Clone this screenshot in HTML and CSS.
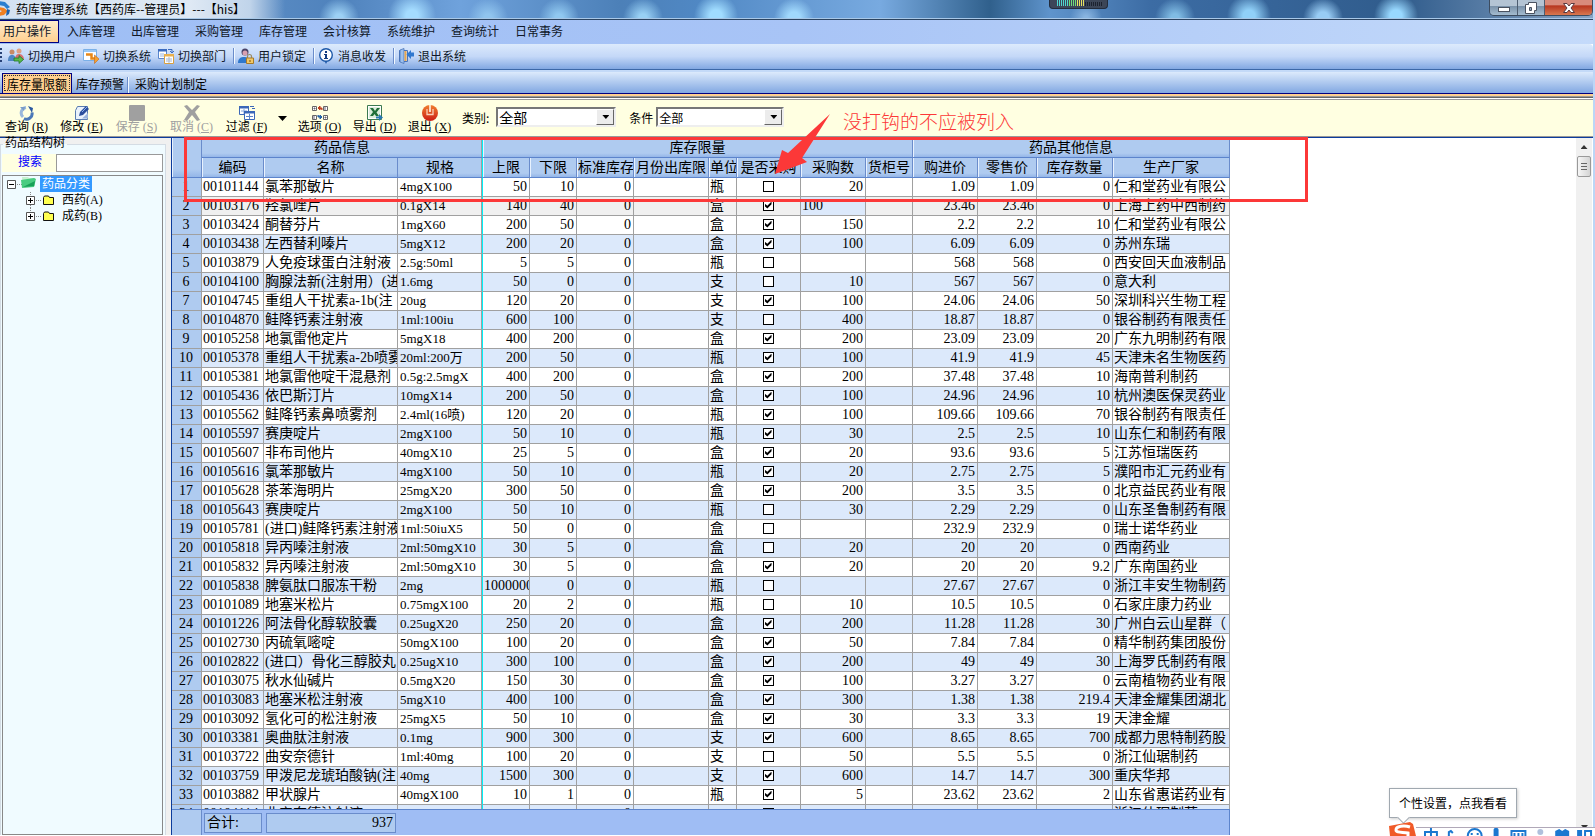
FILE: index.html
```html
<!DOCTYPE html>
<html lang="zh-CN">
<head>
    <meta charset="UTF-8">
    <meta name="viewport" content="width=device-width, initial-scale=1.0">
    <title>药库管理系统</title>
    <link rel="stylesheet" href="styles.css">
</head>
<body>
    <div class="app">
        <header class="titlebar">
            <svg class="app-icon" width="12" height="16" viewBox="0 0 12 16">
                <path d="M0 1l6 1 5 5-3 2-3-3-5-1z" fill="#2a7fd0"/>
                <path d="M0 7l5 1 4 3-4 4-5 1v-3l3-2-3-1z" fill="#f08020"/>
                <path d="M8 9l3 1-1 4-3 2z" fill="#1c62ae"/>
            </svg>
            <span class="title">药库管理系统【西药库--管理员】---【his】</span>
            <div class="meter">
                <svg width="46" height="6" viewBox="0 0 46 6">
                    <path d="M0 3h12" stroke="#4fd6d0" stroke-width="6" stroke-dasharray="1 1"/>
                    <path d="M12 3h8" stroke="#6fdc7a" stroke-width="6" stroke-dasharray="1 1"/>
                    <path d="M20 3h8" stroke="#e8e060" stroke-width="6" stroke-dasharray="1 1"/>
                    <path d="M28 4h18" stroke="#1c2230" stroke-width="4" stroke-dasharray="1 1"/>
                </svg>
            </div>
            <div class="win-buttons">
                <button class="win-btn" aria-label="最小化">
                    <svg width="14" height="12" viewBox="0 0 14 12"><rect x="1.5" y="5.500" width="11" height="4" fill="#fff" stroke="#4a5260"/></svg>
                </button>
                <button class="win-btn win-restore" aria-label="还原">
                    <svg width="12" height="12" viewBox="0 0 12 12"><path d="M3.500 .5h8v8h-2v3h-9v-9h3z" fill="#fff" stroke="#4a5260"/><path d="M4.500 5.500h2v3h-2z" fill="#8ea4bc" stroke="#4a5260"/></svg>
                </button>
                <button class="win-btn win-close" aria-label="关闭">
                    <svg width="14" height="12" viewBox="0 0 14 12"><path d="M1.500 1.500h3.500l2 2.500 2-2.500h3.500l-3.500 4.500 3.500 4.500h-3.500l-2-2.500-2 2.500h-3.500l3.500-4.500z" fill="#fff" stroke="#5a3a40"/></svg>
                </button>
            </div>
        </header>

        <nav class="menubar">
            <button class="menu-item active">用户操作</button>
            <button class="menu-item">入库管理</button>
            <button class="menu-item">出库管理</button>
            <button class="menu-item">采购管理</button>
            <button class="menu-item">库存管理</button>
            <button class="menu-item">会计核算</button>
            <button class="menu-item">系统维护</button>
            <button class="menu-item">查询统计</button>
            <button class="menu-item">日常事务</button>
        </nav>

        <div class="quickbar">
            <span class="grip"></span>
            <button class="quick">
                <svg width="16" height="16" viewBox="0 0 16 16">
                    <circle cx="4" cy="4" r="2.500" fill="#c98a66"/><path d="M0 13c0-5 2-6 4-6s4 1 4 6z" fill="#4f86c4"/>
                    <circle cx="11" cy="3" r="2.500" fill="#e0a080"/><path d="M7 12c0-5 2-6 4-6s5 1 5 6z" fill="#d87070"/>
                    <path d="M6 10h5V7.500l4.500 4-4.500 4V13H6z" fill="#5cb84a" stroke="#1f7a28" stroke-width=".8"/>
                </svg>切换用户
            </button>
            <button class="quick">
                <svg width="16" height="16" viewBox="0 0 16 16">
                    <path d="M.5 1.500h13v11H.5z" fill="#fff" stroke="#7ab0e8"/><path d="M1 2h12v2H1z" fill="#9cc8f4"/>
                    <path d="M3 6.500h5.500v4H13" fill="none" stroke="#e88818" stroke-width="2.500"/><path d="M11.500 7l4.500 4-4.500 4.500z" fill="#f5a030" stroke="#c86810" stroke-width=".6"/>
                </svg>切换系统
            </button>
            <button class="quick">
                <svg width="16" height="16" viewBox="0 0 16 16">
                    <path d="M.5 1.500h8v9h-8z" fill="#fff" stroke="#5a86cc"/><path d="M0 1h9v2.500H0z" fill="#3c6cc0"/><path d="M2 6h4M2 8h4" stroke="#9ab6e0"/>
                    <path d="M10 1.500h4v3M12 3l2 2 2-2" fill="none" stroke="#3c6cc0"/>
                    <path d="M6.500 6.500h9v9h-9z" fill="#fff" stroke="#d8a040"/><path d="M6 6h10v2.500H6z" fill="#e8b050"/><path d="M8 11h6M8 13h6M11 9v6" stroke="#a8b8d0"/>
                </svg>切换部门
            </button>
            <span class="sep"></span>
            <button class="quick">
                <svg width="16" height="16" viewBox="0 0 16 16">
                    <circle cx="7" cy="4" r="3.500" fill="#4a4468"/><circle cx="7" cy="5" r="2.500" fill="#d8a0b0"/>
                    <path d="M0 15c0-5 3-6 6-6s5 1 5 6z" fill="#2f78cc"/>
                    <path d="M9.500 10V8.500a2 2 0 0 1 4 0V10" fill="none" stroke="#9a8a60" stroke-width="1.200"/><path d="M8.500 10h7v5.500h-7z" fill="#f0c868" stroke="#a87a28"/><path d="M12 12v2" stroke="#805010"/>
                </svg>用户锁定
            </button>
            <span class="sep"></span>
            <button class="quick">
                <svg width="16" height="16" viewBox="0 0 16 16">
                    <path d="M6 12l2 4 2-4z" fill="#1c58a8"/><circle cx="8" cy="7" r="6.300" fill="#fff" stroke="#1c58a8" stroke-width="1.400"/>
                    <path d="M7 3h2v2H7zM6 6h3v4h1v1H6v-1h1V7H6z" fill="#143c80"/>
                </svg>消息收发
            </button>
            <span class="sep"></span>
            <button class="quick">
                <svg width="16" height="16" viewBox="0 0 16 16">
                    <path d="M1.500 2.500h8v11h-8z" fill="#d6e6fa" stroke="#4a74b8"/><path d="M2 2l4-1.500v15L2 14z" fill="#9cc0ee" stroke="#4a74b8" stroke-width=".8"/>
                    <path d="M6.500 3h2v10h-2z" fill="#e8a850"/><path d="M16 4.500h-3V2L8.500 6.500 13 11V8.500h3z" fill="#2f78d0"/>
                </svg>退出系统
            </button>
        </div>

        <div class="tabs">
            <button class="tab active">库存量限额</button>
            <button class="tab">库存预警</button>
            <span class="sep"></span>
            <button class="tab">采购计划制定</button>
        </div>

        <div class="toolbar">
            <button class="tool">
                <svg width="16" height="16" viewBox="0 0 16 16">
                    <path d="M7 2.500A5.500 5.500 0 0 0 4 12" fill="none" stroke="#9ab8dc" stroke-width="3"/><path d="M5 13.500a5.500 5.500 0 0 0 8-6" fill="none" stroke="#4a78b8" stroke-width="3"/>
                    <path d="M9 1l5 2-1 5z" fill="#2a58a0"/><path d="M1 2l5 0-1 4z" fill="#7a9cc8"/>
                </svg>
                <span>查询 (<u>R</u>)</span>
            </button>
            <button class="tool">
                <svg width="16" height="16" viewBox="0 0 16 16">
                    <path d="M3.500 1.500h10v13h-12v-9z" fill="#eaf2fc" stroke="#5a7cb0"/><path d="M8 13.500h6V8z" fill="#9ab4dc"/>
                    <path d="M6 7l6-6 3 3-6 6-4 1z" fill="#2c4f9c"/><path d="M8 7l5-5" stroke="#8cb0ec"/>
                </svg>
                <span>修改 (<u>E</u>)</span>
            </button>
            <button class="tool" disabled>
                <svg width="16" height="16" viewBox="0 0 16 16"><rect width="16" height="16" rx="1" fill="#a0a0a0"/></svg>
                <span>保存 (<u>S</u>)</span>
            </button>
            <button class="tool" disabled>
                <svg width="16" height="16" viewBox="0 0 16 16"><path d="M0 1l3-1 5 5 5-5 3 1-5 6 5 8-3 1-5-6-5 6-3-1 5-8z" fill="#a0a0a0"/></svg>
                <span>取消 (<u>C</u>)</span>
            </button>
            <button class="tool">
                <svg width="16" height="16" viewBox="0 0 16 16">
                    <path d="M.5 1.500h9v8h-9z" fill="#fff" stroke="#3c68b8"/><path d="M0 1h10v2.500H0z" fill="#3c68b8"/><path d="M2 6h6M5 4v5" stroke="#88a8dc"/>
                    <path d="M11 1.500h4M13 3.500h3" stroke="#3c68b8"/>
                    <path d="M5.500 6.500h10v8h-10z" fill="#fff" stroke="#3c68b8"/><path d="M5 6h11v2.500H5z" fill="#3c68b8"/><path d="M7 11.500h7M10.500 9v5" stroke="#5c84c8"/>
                </svg>
                <span>过滤 (<u>F</u>)</span>
            </button>
            <button class="drop" aria-label="更多过滤"></button>
            <button class="tool">
                <svg width="16" height="16" viewBox="0 0 16 16">
                    <path d="M.5 1.500h4v4h-4zM11.500 1.500h4v4h-4z" fill="#fff" stroke="#666"/><path d="M.5 10.500h4v4h-4zM11.500 10.500h4v4h-4z" fill="#fff" stroke="#666"/>
                    <path d="M2 3h1v1H2zM13 2v3M2 11v3M13 12h1v1h-1z" fill="#444" stroke="#667"/>
                    <path d="M10 5V3H7M8 1L6 3l2 2z" fill="#c04020" stroke="#c04020"/><path d="M6 10v2h3M8 10l2 2-2 2z" fill="#2060a8" stroke="#2060a8"/>
                </svg>
                <span>选项 (<u>O</u>)</span>
            </button>
            <button class="tool">
                <svg width="16" height="16" viewBox="0 0 16 16">
                    <path d="M.5.5h14v14H.5z" fill="#fff" stroke="#3c7a50"/><path d="M2 2h11v11H2z" fill="#dcecdc"/>
                    <path d="M3 3h3l2 3 2-3h3L9.500 7.500 12 11H9L7.500 9 6 11H3l3-4z" fill="#1f6e38"/>
                    <path d="M9 11.500h3V9l4 3.500-4 3.500v-2.500H9z" fill="#2878b0"/>
                </svg>
                <span>导出 (<u>D</u>)</span>
            </button>
            <button class="tool">
                <svg width="16" height="16" viewBox="0 0 16 16">
                    <defs><linearGradient id="power" x1="0" y1="0" x2="0" y2="1"><stop offset="0" stop-color="#f08030"/><stop offset="1" stop-color="#cc1c14"/></linearGradient></defs>
                    <circle cx="8" cy="8" r="8" fill="url(#power)"/><path d="M5 4v5.500h6V4" fill="none" stroke="#f8d0b8" stroke-width="1.300"/><path d="M8 0v7" stroke="#fff4e8" stroke-width="1.600"/>
                </svg>
                <span>退出 (<u>X</u>)</span>
            </button>
            <div class="filter">
                <label for="category">类别:</label>
                <div class="combo combo-lg">
                    <select id="category"><option>全部</option></select>
                </div>
            </div>
            <div class="filter">
                <label for="condition">条件</label>
                <div class="combo">
                    <select id="condition"><option>全部</option></select>
                </div>
            </div>
        </div>

        <main class="workspace">
            <aside class="sidebar">
                <fieldset class="tree-group">
                    <legend>药品结构树</legend>
                    <div class="search">
                        <label for="search">搜索</label>
                        <input type="text" id="search">
                    </div>
                    <div class="tree">
                        <div class="node">
                            <svg width="29" height="16" viewBox="0 0 29 16">
                                <path d="M.5 4.500h8v8h-8z" fill="#fff" stroke="#555"/><path d="M2 8.500h5" stroke="#000"/><path d="M10 8.500h5" stroke="#888" stroke-dasharray="1 1"/>
                                <path d="M15 1l6 0 1 1h6v8l-12 2z" fill="#c8f0d0"/><path d="M14 4l13-2 2 1-2 8-12 1z" fill="#48cc80"/><path d="M16 11l11-1 1-5z" fill="#18a058"/>
                            </svg>
                            <span class="selected">药品分类</span>
                        </div>
                        <div class="node child">
                            <svg width="29" height="16" viewBox="0 0 29 16">
                                <path d="M4.500 0v4" stroke="#888" stroke-dasharray="1 1"/><path d="M.5 4.500h8v8h-8z" fill="#fff" stroke="#555"/><path d="M2 8.500h5M4.500 6v5" stroke="#000"/><path d="M4.500 13v3" stroke="#888" stroke-dasharray="1 1"/><path d="M10 8.500h6" stroke="#888" stroke-dasharray="1 1"/>
                                <path d="M17.500 12.500v-7l1-1.500h4l1 1.500h4v7z" fill="#ffff50" stroke="#111"/>
                            </svg>
                            <span>西药(A)</span>
                        </div>
                        <div class="node child">
                            <svg width="29" height="16" viewBox="0 0 29 16">
                                <path d="M4.500 0v4" stroke="#888" stroke-dasharray="1 1"/><path d="M.5 4.500h8v8h-8z" fill="#fff" stroke="#555"/><path d="M2 8.500h5M4.500 6v5" stroke="#000"/><path d="M10 8.500h6" stroke="#888" stroke-dasharray="1 1"/>
                                <path d="M17.500 12.500v-7l1-1.500h4l1 1.500h4v7z" fill="#ffff50" stroke="#111"/>
                            </svg>
                            <span>成药(B)</span>
                        </div>
                    </div>
                </fieldset>
            </aside>

            <section class="grid-pane">
                <div class="grid-scroll">
                    <table class="grid">
                        <colgroup>
                            <col class="c-no"><col class="c-code"><col class="c-name"><col class="c-spec"><col class="c-limit"><col class="c-limit">
                            <col class="c-std"><col class="c-month"><col class="c-unit"><col class="c-check"><col class="c-qty"><col class="c-shelf">
                            <col class="c-buy"><col class="c-sell"><col class="c-stock"><col class="c-maker">
                        </colgroup>
                        <thead>
                            <tr class="groups">
                                <th rowspan="2"></th>
                                <th colspan="3" class="frozen">药品信息</th>
                                <th colspan="8">库存限量</th>
                                <th colspan="4">药品其他信息</th>
                            </tr>
                            <tr>
                                <th>编码</th><th>名称</th><th class="frozen">规格</th><th>上限</th><th>下限</th><th>标准库存</th><th>月份出库限</th><th>单位</th>
                                <th>是否采购</th><th>采购数</th><th>货柜号</th><th>购进价</th><th>零售价</th><th>库存数量</th><th>生产厂家</th>
                            </tr>
                        </thead>
                        <tbody id="rows"></tbody>
                    </table>
                </div>
                <div class="totals">
                    <span class="totals-no"></span>
                    <span class="total-label">合计:</span>
                    <span class="total-value">937</span>
                </div>
            </section>

            <div class="scrollbar">
                <span class="arrow-up"></span>
                <span class="thumb"></span>
                <span class="arrow-down"></span>
            </div>
        </main>
    </div>

    <!-- red markup over the grid -->
    <div class="mark-box"></div>
    <svg class="mark-arrow" width="60" height="64" viewBox="0 0 60 64"><path d="M55 2L13 41l-6-3-7 24 32-12-5-4z" fill="#fc3838"/></svg>
    <div class="mark-text">没打钩的不应被列入</div>

    <div class="tip">个性设置，点我看看</div>
    <div class="ime">
        <svg class="ime-logo" width="27" height="14" viewBox="0 0 27 14"><path d="M0 4l21-4 3 2 3 12H1z" fill="#f05a28"/><path d="M21 5c-6-2-14-1-14 3 0 3 6 2 12 3v3" fill="none" stroke="#fff" stroke-width="3"/></svg>
        <svg class="ime-icons" width="172" height="8" viewBox="0 0 172 8">
            <g fill="none" stroke="#1c78d0" stroke-width="2">
                <path d="M1 8V4h12v4M7 0v8"/><path d="M25 8V4l2-1 2 2"/><circle cx="51" cy="8" r="7"/><path d="M48 5v2M54 5v2"/>
                <path d="M88 8V3h14v5M91 5v3M95 5v3M99 5v3"/><path d="M162 3h6v6h-6z"/>
            </g>
            <path d="M70 8V2c0-3 5-3 5 0v6z" fill="#1c78d0"/><circle cx="117" cy="4" r="3" fill="#b0c0dc"/><path d="M132 3l4-2 3 2 3-2 4 2v5h-14z" fill="#1c78d0"/><path d="M154 2h5v6h-5z" fill="#1c78d0"/>
        </svg>
    </div>

    <script src="script.js"></script>
</body>
</html>
```

FILE: styles.css
```css
* {
    box-sizing: border-box;
}

body {
    margin: 0;
    background: #fff;
    color: #000;
    font-family: "Noto Sans CJK SC", sans-serif;
    font-size: 12px;
    overflow: hidden;
}

button {
    background: none;
    border: none;
    padding: 0;
    color: inherit;
    font-family: inherit;
    font-size: 12px;
    white-space: nowrap;
}

.app {
    display: flex;
    flex-direction: column;
    height: 100vh;
    border-right: 2px solid #bcd6f6;
    padding-bottom: 1px;
}

/* title bar */
.titlebar {
    position: relative;
    display: flex;
    align-items: flex-start;
    height: 20px;
    flex: none;
    overflow: hidden;
    border-bottom: 1px solid #2c4460;
    box-shadow: inset 0 -1px #a8c8e8;
    background:
        linear-gradient(90deg, #d4e2f1 0, #dfe9f4 190px, #c0d4ea 250px, transparent 285px),
        radial-gradient(circle at 339px 18px, #9cd0f4 4px, transparent 20px),
        radial-gradient(circle at 412px 16px, #a4dcff 6px, transparent 24px),
        radial-gradient(circle at 488px 18px, #90c4ee 4px, transparent 20px),
        radial-gradient(circle at 559px 18px, #90c8f0 4px, transparent 20px),
        radial-gradient(circle at 643px 18px, #98d0f4 4px, transparent 20px),
        radial-gradient(circle at 716px 16px, #a0dcff 6px, transparent 22px),
        radial-gradient(circle at 794px 18px, #a0d8fc 6px, transparent 20px),
        radial-gradient(circle at 1086px 18px, #88b4e0 2px, transparent 16px),
        radial-gradient(circle at 1175px 18px, #80bce4 4px, transparent 20px),
        radial-gradient(circle at 1249px 16px, #90d0f8 6px, transparent 22px),
        radial-gradient(circle at 1323px 18px, #98ccf4 6px, transparent 20px),
        radial-gradient(circle at 1396px 16px, #98d8ff 6px, transparent 22px),
        linear-gradient(90deg, #7aa8dc 0, #4f82bc 340px, #6fa2dc 460px, #4c80b8 620px, #5088c4 700px, #78aae0 880px, #30608c 990px, #5f94cc 1050px, #3c6ca4 1150px, #305c8c 1400px, #88a4c4 1595px);
}

.app-icon {
    margin-left: -1px;
}

.title {
    margin-left: 5px;
    line-height: 17px;
}

.meter {
    position: absolute;
    left: 1049px;
    top: 0;
    width: 59px;
    height: 9px;
    padding-left: 7px;
    line-height: 0;
    background: #3c4658;
    border: 1px solid #232c3c;
    border-top: none;
    border-radius: 0 0 4px 4px;
}

.win-buttons {
    display: flex;
    margin-left: auto;
    height: 16px;
    border: 1px solid #3c4c60;
    border-top: none;
    border-radius: 0 0 5px 5px;
    overflow: hidden;
}

.win-btn {
    width: 28px;
    line-height: 0;
    background: linear-gradient(#b4c4d4 40%, #7890a8 40%, #a4bcd0);
    border-right: 1px solid #4c5c70;
}

.win-restore {
    width: 27px;
}

.win-close {
    width: 47px;
    border-right: none;
    background: linear-gradient(#d88c7c 30%, #b83820 40%, #d87850);
}

/* menu */
.menubar {
    display: flex;
    height: 24px;
    flex: none;
    background: linear-gradient(90deg, #9ebef5, #a8c4f6 50%, #c4dafa);
}

.menu-item {
    width: 64px;
    height: 24px;
    line-height: 20px;
    padding-bottom: 2px;
    color: #101828;
}

.menu-item.active {
    width: 59px;
    height: 23px;
    border: 1px solid #000080;
    border-left: none;
    padding-right: 4px;
    background: linear-gradient(#ffeccc, #ffd090);
}

.quickbar {
    display: flex;
    align-items: center;
    height: 26px;
    flex: none;
    padding: 0 4px 2px 0;
    border-bottom: 1px solid #3c68a8;
    border-top-right-radius: 4px;
    background: linear-gradient(#dceafc, #c4d8f8 50%, #82a8e2);
}

.grip {
    width: 2px;
    height: 16px;
    margin-right: 6px;
    background: repeating-linear-gradient(#274176 0 2px, transparent 2px 4px);
}

.quick {
    display: flex;
    align-items: center;
    gap: 4px;
    margin-right: 7px;
    color: #101828;
}

.sep {
    width: 2px;
    height: 16px;
    flex: none;
    margin-right: 3px;
    background: linear-gradient(90deg, #6a8ccb 1px, #f1f9ff 1px);
}

.tabs {
    display: flex;
    align-items: flex-end;
    height: 24px;
    flex: none;
    padding: 2px 2px 0;
    border-top: 2px solid #c4daf8;
    border-bottom: 1px solid #000080;
    background: linear-gradient(#dceafc, #82a8e2);
}

.tab {
    height: 19px;
    line-height: 18px;
    padding: 0 3px;
}

.tab.active {
    border: 1px solid #000080;
    border-bottom: none;
    height: 20px;
    padding: 0 4px;
    margin-right: 1px;
    background: #ffd090;
    outline: 1px dotted #333;
    outline-offset: -3px;
}

/* tool bar */
.toolbar {
    display: flex;
    align-items: flex-start;
    height: 44px;
    flex: none;
    padding: 11px 0 0 6px;
    border-bottom: 1px solid #0c3c9c;
    background: linear-gradient(#ffd090 2px, #999 2px 3px, #666 3px 4px, #fff 4px 5px, #999 5px 6px, #ffffe1 6px 42px, #999 42px);
}

.tool {
    display: flex;
    flex-direction: column;
    align-items: center;
    width: 41px;
    margin-right: 14px;
    line-height: 13px;
}

.tool span {
    font-family: "Liberation Serif", "Noto Sans CJK SC", serif;
}

.tool:disabled {
    color: #a0a0a0;
}

.drop {
    width: 9px;
    height: 5px;
    margin: 11px 12px 0 -3px;
    background: #000;
    clip-path: polygon(0 0, 100% 0, 50% 100%);
}

.filter {
    display: flex;
    align-items: center;
    margin: 2px 13px 0 -2px;
}

.filter + .filter {
    margin-left: 0;
}

.filter label {
    white-space: nowrap;
    margin-right: 3px;
}

.combo {
    position: relative;
    width: 128px;
    height: 20px;
    border: 2px solid;
    border-color: #777 #eee #eee #777;
    background: #fff;
}

.combo-lg {
    width: 120px;
    margin-left: 4px;
}

.combo select {
    display: block;
    width: 100%;
    height: 100%;
    padding: 0 1px;
    border: none;
    appearance: none;
    background: none;
    color: #000;
    font-family: inherit;
    font-size: 12px;
    line-height: 15px;
}

.combo-lg select {
    font-size: 14px;
}

.combo::before {
    content: "";
    position: absolute;
    right: 0;
    top: 0;
    bottom: 0;
    width: 16px;
    background: #ececec;
    border: 1px solid;
    border-color: #fff #666 #666 #fff;
}

.combo::after {
    content: "";
    position: absolute;
    right: 5px;
    top: 6px;
    width: 7px;
    height: 4px;
    background: #000;
    clip-path: polygon(0 0, 100% 0, 50% 100%);
}

/* work area */
.workspace {
    display: flex;
    flex: 1;
    min-height: 0;
    padding-right: 1px;
}

.sidebar {
    display: flex;
    width: 171px;
    flex: none;
    background: #f0f0f0;
    padding-right: 5px;
}

.tree-group {
    display: flex;
    flex-direction: column;
    flex: 1;
    min-width: 0;
    margin: 0;
    padding: 0 2px 0 1px;
    border: 1px solid #d4dce4;
    border-bottom: none;
    background: #f0fbff;
}

.tree-group legend {
    margin-left: 1px;
    padding: 0 2px;
    height: 13px;
    line-height: 8px;
}

.search {
    display: flex;
    margin: 3px 0;
    background: #ffffe1;
}

.search label {
    width: 54px;
    padding-left: 16px;
    line-height: 14px;
    color: #00f;
}

.search input {
    flex: 1;
    min-width: 0;
    height: 18px;
    border: 1px solid #999;
    background: #fff;
}

.tree {
    flex: 1;
    border: 1px solid #888;
    padding-left: 4px;
}

.node {
    display: flex;
    align-items: center;
    gap: 4px;
    height: 16px;
    line-height: 16px;
    font-family: "Liberation Serif", "Noto Sans CJK SC", serif;
}

.child {
    padding-left: 19px;
    gap: 7px;
}

.selected {
    padding: 0 2px;
    background: #3399ff;
    color: #fff;
}

.grid-pane {
    display: flex;
    flex-direction: column;
    flex: 1;
    min-width: 0;
    border-left: 1px solid #0c3c9c;
}

.grid-scroll {
    flex: 1;
    min-height: 0;
    overflow: hidden;
}

.grid {
    width: 1058px;
    table-layout: fixed;
    border-collapse: separate;
    border-spacing: 0;
    font-family: "Liberation Serif", "Noto Sans CJK SC", serif;
    font-size: 14px;
}

.c-no { width: 30px; }
.c-code { width: 62px; }
.c-name { width: 134px; }
.c-spec { width: 85px; }
.c-limit { width: 47px; }
.c-std { width: 57px; }
.c-month { width: 75px; }
.c-unit { width: 28px; }
.c-check { width: 64px; }
.c-qty { width: 65px; }
.c-shelf { width: 47px; }
.c-buy { width: 65px; }
.c-sell { width: 59px; }
.c-stock { width: 76px; }
.c-maker { width: 117px; }

.grid th,
.grid td {
    padding: 0 2px 0 1px;
    overflow: hidden;
    white-space: nowrap;
}

.grid th {
    height: 20px;
    line-height: 18px;
    padding: 0 1px;
    font-weight: normal;
    background: linear-gradient(#afcbf0 80%, #94b6e8);
    border-bottom: 1px solid #5c84cc;
    border-right: 1px solid #6a8ccb;
    box-shadow: inset 1px 0 #e8f2ff;
}

.grid td {
    height: 19px;
    line-height: 18px;
    background: #fff;
    border-right: 1px solid #a0a0a0;
    border-bottom: 1px solid #a0a0a0;
}

.grid tr:nth-child(even) td {
    background: #dce9fb;
}

.grid .frozen {
    border-right: 1px solid #00f0f8;
    box-shadow: inset -1px 0 #a0a0a0;
}

.grid td.no,
.grid tr:nth-child(even) td.no {
    text-align: center;
    background: #afcbf0;
}

.grid td.num {
    text-align: right;
}

.grid td.spec {
    padding-left: 2px;
    font-size: 13px;
}

.grid td.check {
    text-align: center;
    line-height: 0;
    padding-bottom: 2px;
}

.grid tr.current td {
    background: #f0f0f0;
}

.grid tr.current td.editing {
    background: #dce9fb;
    text-align: left;
}

.grid input {
    position: relative;
    appearance: none;
    display: block;
    width: 11px;
    height: 11px;
    margin: 0 auto;
    border: 1px solid #000;
    background: #fff;
}

.grid input:checked::before {
    content: "";
    position: absolute;
    left: 1px;
    top: 1px;
    width: 7px;
    height: 7px;
    background: #000;
    clip-path: polygon(0 28%, 40% 60%, 100% 0, 100% 40%, 40% 100%, 0 65%);
}

.totals {
    display: flex;
    align-items: center;
    width: 1058px;
    height: 26px;
    flex: none;
    border-top: 1px solid #5c84cc;
    border-right: 1px solid #5c84cc;
    background: #9fbdf4;
    font-family: "Liberation Serif", "Noto Sans CJK SC", serif;
    font-size: 14px;
}

.totals-no {
    width: 30px;
    align-self: stretch;
    background: #afcbf0;
    border-right: 1px solid #6a8ccb;
}

.total-label,
.total-value {
    height: 20px;
    line-height: 18px;
    margin-left: 2px;
    padding: 0 2px;
    border: 1px solid #6a8ccb;
    background: #afcbf0;
}

.total-label {
    width: 58px;
}

.total-value {
    width: 130px;
    margin-left: 4px;
    text-align: right;
}

.scrollbar {
    display: flex;
    flex-direction: column;
    align-items: center;
    width: 16px;
    flex: none;
    background: #f0f0f0;
}

.arrow-up,
.arrow-down {
    width: 7px;
    height: 4px;
    background: #333;
    clip-path: polygon(50% 0, 100% 100%, 0 100%);
}

.arrow-up {
    margin: 7px 0;
}

.arrow-down {
    margin: auto 0 6px;
    transform: rotate(180deg);
}

.thumb {
    width: 14px;
    height: 21px;
    border: 1px solid #999;
    border-radius: 2px;
    background:
        repeating-linear-gradient(#666 0 1px, transparent 1px 3px) center / 6px 7px no-repeat,
        linear-gradient(90deg, #f6f6f6, #d4d4d4);
}

/* markup */
.mark-box {
    position: absolute;
    left: 184px;
    top: 137px;
    width: 1124px;
    height: 65px;
    border: 3px solid #fc3838;
}

.mark-arrow {
    position: absolute;
    left: 775px;
    top: 112px;
}

.mark-text {
    position: absolute;
    left: 843px;
    top: 108px;
    color: #fc3838;
    font-size: 19px;
    font-weight: 300;
    line-height: 26px;
}

.tip {
    position: absolute;
    right: 78px;
    bottom: 18px;
    width: 128px;
    height: 30px;
    line-height: 27px;
    padding-left: 9px;
    border: 1px solid #a0a8b0;
    background: #fff;
    box-shadow: 1px 1px 3px #ccc;
    white-space: nowrap;
}

.tip::after {
    content: "";
    position: absolute;
    left: 9px;
    bottom: -5px;
    width: 8px;
    height: 8px;
    border: 1px solid #a0a8b0;
    border-top: none;
    border-left: none;
    background: #fff;
    transform: rotate(45deg);
}

.ime {
    position: absolute;
    right: 0;
    bottom: 0;
    display: flex;
    align-items: flex-end;
    width: 206px;
    height: 13px;
}

.ime-logo {
    flex: none;
}

.ime-icons {
    flex: 1;
    box-sizing: content-box;
    height: 8px;
    padding-left: 8px;
    background: #fff;
    border-top: 1px solid #b0a8b8;
}
```

FILE: script.js
```js
// code, name, spec, upper, lower, unit, purchase, qty, buy, sell, stock, maker
const drugs = [
    ['00101144', '氯苯那敏片', '4mgX100', '50', '10', '瓶', 0, '20', '1.09', '1.09', '0', '仁和堂药业有限公'],
    ['00103176', '羟氯喹片', '0.1gX14', '140', '40', '盒', 1, '100', '23.46', '23.46', '0', '上海上药中西制药'],
    ['00103424', '酮替芬片', '1mgX60', '200', '50', '盒', 1, '150', '2.2', '2.2', '10', '仁和堂药业有限公'],
    ['00103438', '左西替利嗪片', '5mgX12', '200', '20', '盒', 1, '100', '6.09', '6.09', '0', '苏州东瑞'],
    ['00103879', '人免疫球蛋白注射液', '2.5g:50ml', '5', '5', '瓶', 0, '', '568', '568', '0', '西安回天血液制品'],
    ['00104100', '胸腺法新(注射用）(进', '1.6mg', '50', '0', '支', 0, '10', '567', '567', '0', '意大利'],
    ['00104745', '重组人干扰素a-1b(注', '20ug', '120', '20', '支', 1, '100', '24.06', '24.06', '50', '深圳科兴生物工程'],
    ['00104870', '鲑降钙素注射液', '1ml:100iu', '600', '100', '支', 0, '400', '18.87', '18.87', '0', '银谷制药有限责任'],
    ['00105258', '地氯雷他定片', '5mgX18', '400', '200', '盒', 1, '200', '23.09', '23.09', '20', '广东九明制药有限'],
    ['00105378', '重组人干扰素a-2b喷雾', '20ml:200万', '200', '50', '瓶', 1, '100', '41.9', '41.9', '45', '天津未名生物医药'],
    ['00105381', '地氯雷他啶干混悬剂', '0.5g:2.5mgX', '400', '200', '盒', 1, '200', '37.48', '37.48', '10', '海南普利制药'],
    ['00105436', '依巴斯汀片', '10mgX14', '200', '50', '盒', 1, '100', '24.96', '24.96', '10', '杭州澳医保灵药业'],
    ['00105562', '鲑降钙素鼻喷雾剂', '2.4ml(16喷)', '120', '20', '瓶', 1, '100', '109.66', '109.66', '70', '银谷制药有限责任'],
    ['00105597', '赛庚啶片', '2mgX100', '50', '10', '瓶', 1, '30', '2.5', '2.5', '10', '山东仁和制药有限'],
    ['00105607', '非布司他片', '40mgX10', '25', '5', '盒', 1, '20', '93.6', '93.6', '5', '江苏恒瑞医药'],
    ['00105616', '氯苯那敏片', '4mgX100', '50', '10', '瓶', 1, '20', '2.75', '2.75', '5', '濮阳市汇元药业有'],
    ['00105628', '茶苯海明片', '25mgX20', '300', '50', '盒', 1, '200', '3.5', '3.5', '0', '北京益民药业有限'],
    ['00105643', '赛庚啶片', '2mgX100', '50', '10', '瓶', 0, '30', '2.29', '2.29', '0', '山东圣鲁制药有限'],
    ['00105781', '(进口)鲑降钙素注射液', '1ml:50iuX5', '50', '0', '盒', 0, '', '232.9', '232.9', '0', '瑞士诺华药业'],
    ['00105818', '异丙嗪注射液', '2ml:50mgX10', '30', '5', '盒', 0, '20', '20', '20', '0', '西南药业'],
    ['00105832', '异丙嗪注射液', '2ml:50mgX10', '30', '5', '盒', 1, '20', '20', '20', '9.2', '广东南国药业'],
    ['00105838', '脾氨肽口服冻干粉', '2mg', '1000000', '0', '瓶', 0, '', '27.67', '27.67', '0', '浙江丰安生物制药'],
    ['00101089', '地塞米松片', '0.75mgX100', '20', '2', '瓶', 0, '10', '10.5', '10.5', '0', '石家庄康力药业'],
    ['00101226', '阿法骨化醇软胶囊', '0.25ugX20', '250', '20', '盒', 1, '200', '11.28', '11.28', '30', '广州白云山星群（'],
    ['00102730', '丙硫氧嘧啶', '50mgX100', '100', '20', '盒', 1, '50', '7.84', '7.84', '0', '精华制药集团股份'],
    ['00102822', '(进口）骨化三醇胶丸', '0.25ugX10', '300', '100', '盒', 1, '200', '49', '49', '30', '上海罗氏制药有限'],
    ['00103075', '秋水仙碱片', '0.5mgX20', '150', '30', '盒', 1, '100', '3.27', '3.27', '0', '云南植物药业有限'],
    ['00103083', '地塞米松注射液', '5mgX10', '400', '100', '盒', 1, '300', '1.38', '1.38', '219.4', '天津金耀集团湖北'],
    ['00103092', '氢化可的松注射液', '25mgX5', '50', '10', '盒', 1, '30', '3.3', '3.3', '19', '天津金耀'],
    ['00103381', '奥曲肽注射液', '0.1mg', '900', '300', '支', 1, '600', '8.65', '8.65', '700', '成都力思特制药股'],
    ['00103722', '曲安奈德针', '1ml:40mg', '100', '20', '支', 0, '50', '5.5', '5.5', '0', '浙江仙琚制药'],
    ['00103759', '甲泼尼龙琥珀酸钠(注', '40mg', '1500', '300', '支', 1, '600', '14.7', '14.7', '300', '重庆华邦'],
    ['00103882', '甲状腺片', '40mgX100', '10', '1', '瓶', 1, '5', '23.62', '23.62', '2', '山东省惠诺药业有'],
    ['00104114', '曲安奈德注射液', '', '', '', '', 1, '', '', '', '', '浙江仙琚制药']
];

const CURRENT = 1;

document.getElementById('rows').innerHTML = drugs.map((d, i) => {
    const [code, name, spec, upper, lower, unit, purchase, qty, buy, sell, stock, maker] = d;
    return `
        <tr class="${i === CURRENT ? 'current' : ''}">
            <td class="no">${i + 1}</td>
            <td>${code}</td>
            <td>${name}</td>
            <td class="spec frozen">${spec}</td>
            <td class="num">${upper}</td>
            <td class="num">${lower}</td>
            <td class="num">0</td>
            <td></td>
            <td>${unit}</td>
            <td class="check"><input type="checkbox" aria-label="是否采购 ${name}" ${purchase ? 'checked' : ''}></td>
            <td class="num ${i === CURRENT ? 'editing' : ''}">${qty}</td>
            <td></td>
            <td class="num">${buy}</td>
            <td class="num">${sell}</td>
            <td class="num">${stock}</td>
            <td>${maker}</td>
        </tr>`;
}).join('');
```
